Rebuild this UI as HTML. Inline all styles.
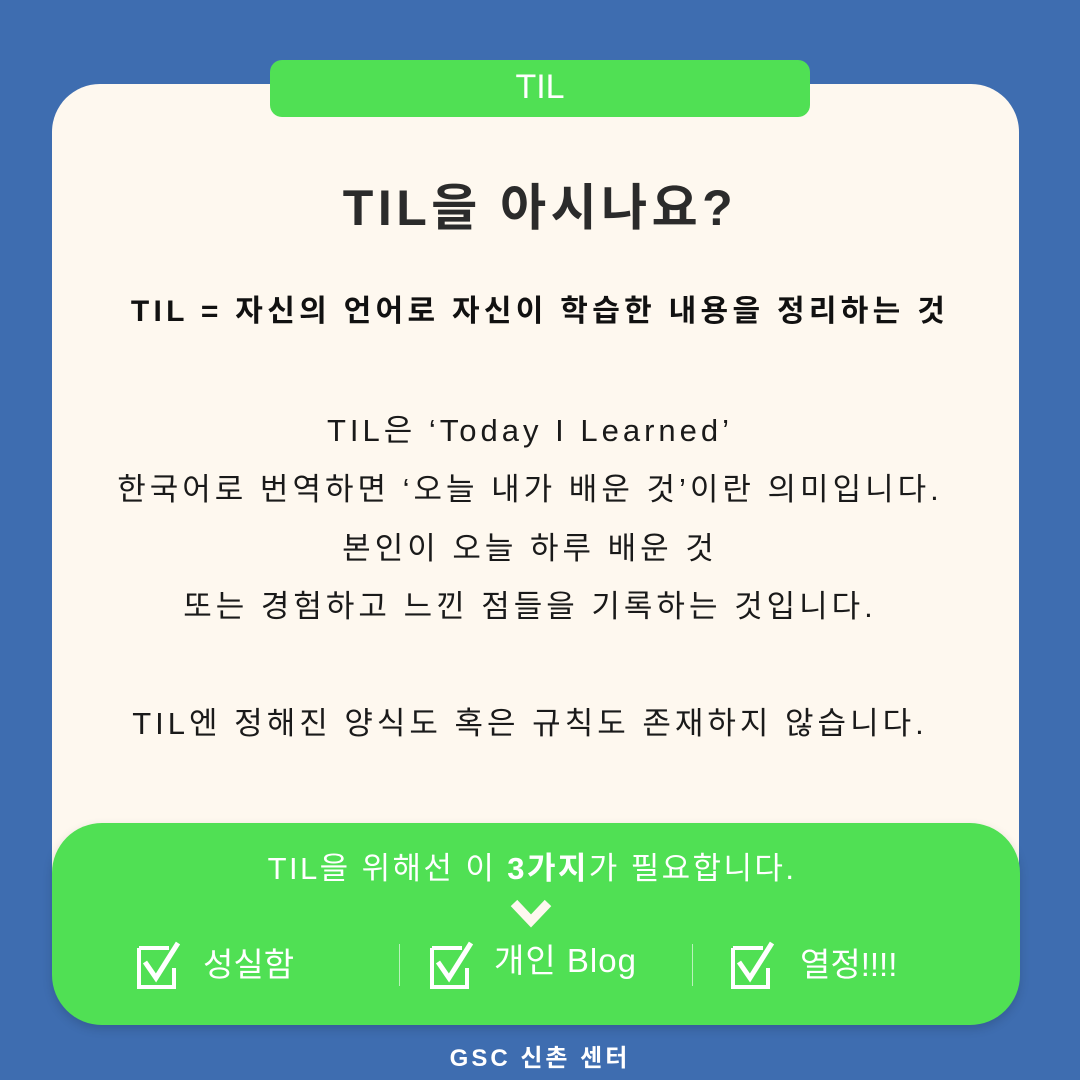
<!DOCTYPE html>
<html><head><meta charset="utf-8"><style>
*{margin:0;padding:0;box-sizing:border-box}
body{width:1080px;height:1080px;background:#3e6db0;position:relative;overflow:hidden;font-family:"Liberation Sans","Noto Sans CJK KR",sans-serif}
.card{position:absolute;left:52px;top:84px;width:967px;height:900px;background:#fef8ef;border-radius:48px}
.tab{position:absolute;left:270px;top:60px;width:540px;height:57px;background:#50e054;border-radius:12px;color:#fff;font-size:34px;text-align:center;line-height:54px}
.c{position:absolute;left:0;width:1080px;text-align:center;white-space:nowrap}
.t{top:168px;font-size:50px;font-weight:bold;color:#2b2b2b;letter-spacing:4.5px}
.s{top:286px;font-size:30px;font-weight:bold;color:#111;letter-spacing:4.3px}
.b{font-size:31px;color:#1a1a1a;letter-spacing:4px;padding-right:20px}
.g{position:absolute;left:52px;top:823px;width:968px;height:202px;background:#50e054;border-radius:50px;box-shadow:0 4px 10px rgba(0,0,0,.15)}
.w{color:#fff}
.item{position:absolute;top:940px;color:#fff;font-size:33px;line-height:50px}
.sep{position:absolute;top:944px;width:1px;height:42px;background:rgba(255,255,255,.6)}
</style></head><body>
<div class="card"></div>
<div class="tab">TIL</div>
<div class="c t">TIL을 아시나요?</div>
<div class="c s">TIL = 자신의 언어로 자신이 학습한 내용을 정리하는 것</div>
<div class="c b" style="top:405px">TIL은 ‘Today I Learned’</div>
<div class="c b" style="top:464px">한국어로 번역하면 ‘오늘 내가 배운 것’이란 의미입니다.</div>
<div class="c b" style="top:523px">본인이 오늘 하루 배운 것</div>
<div class="c b" style="top:581px">또는 경험하고 느낀 점들을 기록하는 것입니다.</div>
<div class="c b" style="top:698px">TIL엔 정해진 양식도 혹은 규칙도 존재하지 않습니다.</div>
<div class="g"></div>
<div class="c w" style="top:843px;font-size:31px;letter-spacing:2.4px;padding-right:16px">TIL을 위해선 이 <b>3가지</b>가 필요합니다.</div>
<svg style="position:absolute;left:510px;top:897px" width="42" height="32" viewBox="0 0 42 32"><path d="M4 6 L21 24 L38 6" fill="none" stroke="#fef8ef" stroke-width="9" stroke-linejoin="miter"/></svg>
<svg style="position:absolute;left:136px;top:940px" width="52" height="50" viewBox="0 0 52 50"><path d="M3 8 H33 M3 8 V47 H38 V28" fill="none" stroke="#fff" stroke-width="4"/><path d="M9 22 L20 38 L42 3" fill="none" stroke="#fff" stroke-width="5"/></svg>
<div class="item" style="left:203px">성실함</div>
<div class="sep" style="left:399px"></div>
<svg style="position:absolute;left:429px;top:940px" width="52" height="50" viewBox="0 0 52 50"><path d="M3 8 H33 M3 8 V47 H38 V28" fill="none" stroke="#fff" stroke-width="4"/><path d="M9 22 L20 38 L42 3" fill="none" stroke="#fff" stroke-width="5"/></svg>
<div class="item" style="left:494px;top:936px;letter-spacing:1px">개인 Blog</div>
<div class="sep" style="left:692px"></div>
<svg style="position:absolute;left:730px;top:940px" width="52" height="50" viewBox="0 0 52 50"><path d="M3 8 H33 M3 8 V47 H38 V28" fill="none" stroke="#fff" stroke-width="4"/><path d="M9 22 L20 38 L42 3" fill="none" stroke="#fff" stroke-width="5"/></svg>
<div class="item" style="left:800px">열정!!!!</div>
<div class="c w" style="top:1038px;font-size:24px;font-weight:bold;letter-spacing:3px">GSC 신촌 센터</div>
</body></html>
